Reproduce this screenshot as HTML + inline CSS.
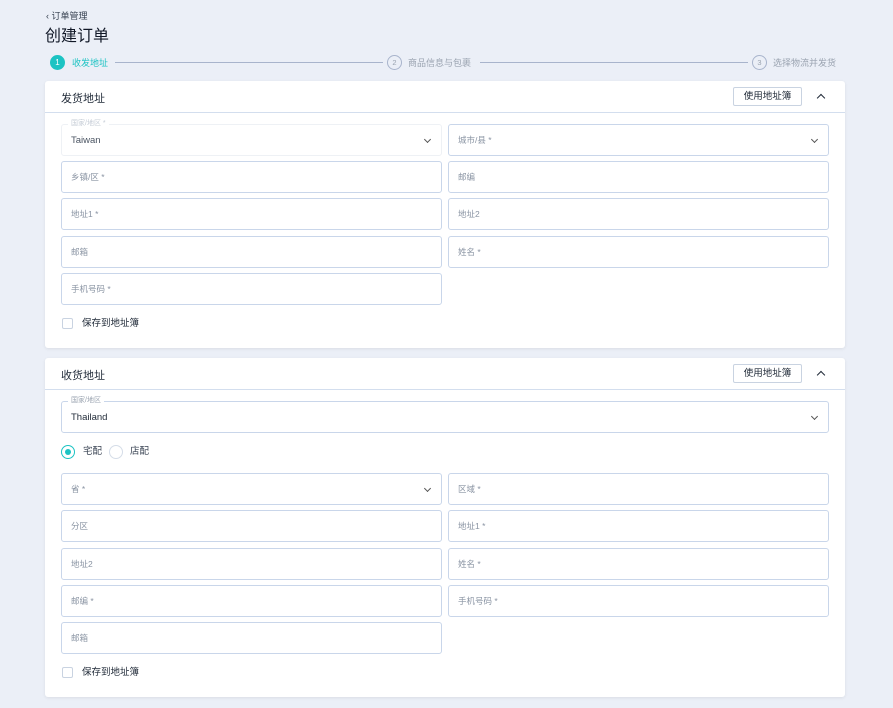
<!DOCTYPE html>
<html><head><meta charset="utf-8"><style>
*{box-sizing:border-box;margin:0;padding:0}
body{width:893px;height:708px;background:#ebeff7;font-family:"Liberation Sans","Noto Sans CJK SC",sans-serif;position:relative;overflow:hidden;color:#1f2937}
.a{position:absolute}
.card{position:absolute;left:45px;width:800px;background:#fff;border-radius:3px;box-shadow:0 1px 3px rgba(0,0,0,.08)}
.hd{position:absolute;left:0;top:0;width:100%;height:32px;border-bottom:1px solid #d3deee}
.hd .t{position:absolute;left:16px;top:9px;font-size:11px;color:#1f2937}
.btn{position:absolute;left:688px;top:6px;width:69px;height:19px;border:1px solid #c9d3e1;border-radius:2px;font-size:9.5px;text-align:center;line-height:17px;color:#1f2937}
.car{position:absolute;left:773px;top:14px;width:6px;height:6px;border-left:1.6px solid #1f2937;border-top:1.6px solid #1f2937;transform:rotate(45deg)}
.f{position:absolute;width:381px;height:32px;border:1px solid #c9d6ea;border-radius:3px;font-size:8.5px;color:#8a94a3;padding:0 0 0 9px;display:flex;align-items:center}
.f.r{left:403px}.f.l{left:16px}
.dd::after{content:"";position:absolute;right:11px;top:12px;width:4px;height:4px;border-right:1px solid #555;border-bottom:1px solid #555;transform:rotate(45deg)}
.lab{position:absolute;left:6px;top:-5px;background:#fff;padding:0 3px;font-size:7px;color:#9aa3b0;line-height:8px}
.val{font-size:9.5px;color:#1f2937}
.cb{position:absolute;left:17px;width:11px;height:11px;border:1px solid #c9d3e1;border-radius:2px}
.cbt{position:absolute;left:37px;font-size:9.5px;color:#1f2937;line-height:11px}
</style></head><body>
<div class="a" style="left:46px;top:9px;font-size:9px;color:#374151">‹ 订单管理</div>
<div class="a" style="left:45px;top:22px;font-size:16px;color:#111827">创建订单</div>
<div class="a" style="left:50px;top:55px;width:15px;height:15px;border-radius:50%;background:#1cc3c3;color:#fff;font-size:8px;text-align:center;line-height:15px">1</div>
<div class="a" style="left:72px;top:56px;font-size:9px;color:#1cc3c3">收发地址</div>
<div class="a" style="left:115px;top:62px;width:268px;height:1px;background:#a8b4cc"></div>
<div class="a" style="left:387px;top:55px;width:15px;height:15px;border-radius:50%;border:1px solid #a8b4cc;color:#9aa3b0;font-size:7.5px;text-align:center;line-height:13px">2</div>
<div class="a" style="left:408px;top:56px;font-size:9px;color:#9aa3b0">商品信息与包裹</div>
<div class="a" style="left:480px;top:62px;width:268px;height:1px;background:#a8b4cc"></div>
<div class="a" style="left:752px;top:55px;width:15px;height:15px;border-radius:50%;border:1px solid #a8b4cc;color:#9aa3b0;font-size:7.5px;text-align:center;line-height:13px">3</div>
<div class="a" style="left:773px;top:56px;font-size:9px;color:#9aa3b0">选择物流并发货</div>

<div class="card" style="top:81px;height:267px">
 <div class="hd"><div class="t">发货地址</div><div class="btn">使用地址簿</div><div class="car"></div></div>
 <div class="f l dd" style="top:43px;border-color:#eef1f5"><span class="lab" style="color:#c5ccd6">国家/地区 *</span><span class="val" style="color:#4b5563">Taiwan</span></div>
 <div class="f r dd" style="top:43px">城市/县 *</div>
 <div class="f l" style="top:80px">乡镇/区 *</div>
 <div class="f r" style="top:80px">邮编</div>
 <div class="f l" style="top:117px">地址1 *</div>
 <div class="f r" style="top:117px">地址2</div>
 <div class="f l" style="top:155px">邮箱</div>
 <div class="f r" style="top:155px">姓名 *</div>
 <div class="f l" style="top:192px">手机号码 *</div>
 <div class="cb" style="top:237px"></div><div class="cbt" style="top:237px">保存到地址簿</div>
</div>

<div class="card" style="top:358px;height:339px">
 <div class="hd"><div class="t">收货地址</div><div class="btn">使用地址簿</div><div class="car"></div></div>
 <div class="f l dd" style="top:43px;width:768px"><span class="lab">国家/地区</span><span class="val">Thailand</span></div>
 <div class="a" style="left:16px;top:87px;width:14px;height:14px;border-radius:50%;border:1.5px solid #1cc3c3"><div class="a" style="left:2.5px;top:2.5px;width:6px;height:6px;border-radius:50%;background:#1cc3c3"></div></div>
 <div class="a" style="left:38px;top:88px;font-size:9.5px;color:#374151;line-height:12px">宅配</div>
 <div class="a" style="left:64px;top:87px;width:14px;height:14px;border-radius:50%;border:1px solid #d5dde8"></div>
 <div class="a" style="left:85px;top:88px;font-size:9.5px;color:#374151;line-height:12px">店配</div>
 <div class="f l dd" style="top:115px">省 *</div>
 <div class="f r" style="top:115px">区域 *</div>
 <div class="f l" style="top:152px">分区</div>
 <div class="f r" style="top:152px">地址1 *</div>
 <div class="f l" style="top:190px">地址2</div>
 <div class="f r" style="top:190px">姓名 *</div>
 <div class="f l" style="top:227px">邮编 *</div>
 <div class="f r" style="top:227px">手机号码 *</div>
 <div class="f l" style="top:264px">邮箱</div>
 <div class="cb" style="top:309px"></div><div class="cbt" style="top:309px">保存到地址簿</div>
</div>
</body></html>
